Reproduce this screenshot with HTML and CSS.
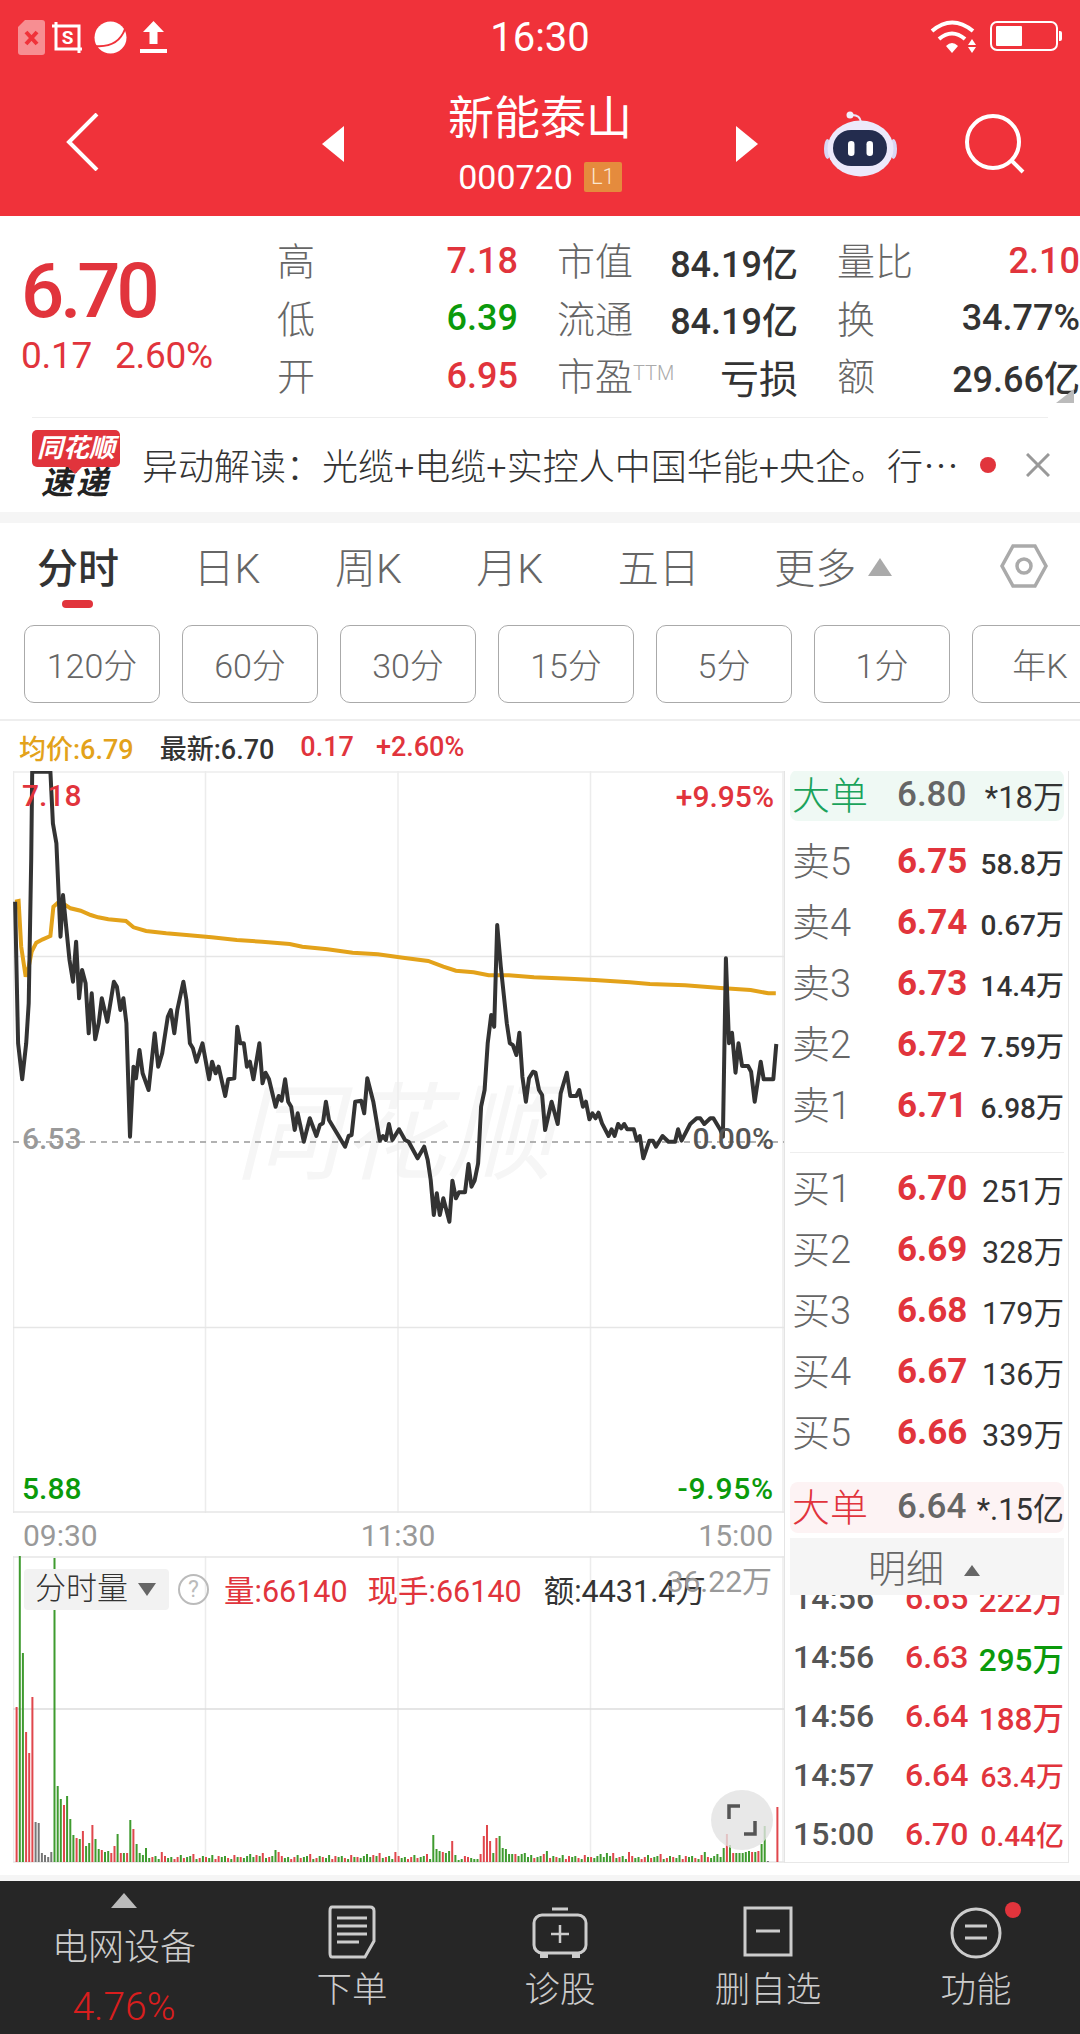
FILE: index.html
```html
<!DOCTYPE html>
<html lang="zh-CN">
<head>
    <meta charset="UTF-8">
    <meta name="viewport" content="width=device-width, initial-scale=1.0">
    <title>新能泰山 000720</title>
    <link rel="stylesheet" href="styles.css">
</head>
<body>
<div class="page">
    <div class="top">
        <div class="status-bar">
            <div class="status-icons">
                <svg class="ic-sim" viewBox="0 0 27 35"><path d="M7 0H24Q27 0 27 3V32Q27 35 24 35H3Q0 35 0 32V7Z" fill="#fff" opacity=".45"/><path d="M8 12L19 24M19 12L8 24" stroke="#f0323a" stroke-width="4"/></svg>
                <svg class="ic-shot" viewBox="0 0 31 31"><path d="M4 0V27H30M0 4H27V31" fill="none" stroke="#fff" stroke-width="3"/><text x="15.500" y="22" text-anchor="middle" class="ic-shot-s">S</text></svg>
                <svg class="ic-planet" viewBox="0 0 33 33"><circle cx="16.500" cy="16.500" r="16" fill="#fff"/><path d="M1 25Q24 27 31 8" fill="none" stroke="#f0323a" stroke-width="2"/></svg>
                <svg class="ic-up" viewBox="0 0 27 32"><path d="M13.500 0L24 11H17.500V23H9.500V11H3Z" fill="#fff"/><rect y="28" width="27" height="4" fill="#fff"/></svg>
            </div>
            <div class="clock">16:30</div>
            <div class="status-right">
                <svg class="ic-wifi" viewBox="0 0 46 33"><g fill="none" stroke="#fff" stroke-width="4"><path d="M2 11Q22 -6 43 11"/><path d="M9 19Q22 8 35 19"/></g><path d="M16 26Q22 20 28 26L22 33Z" fill="#fff"/><path d="M42 19L46 25H38ZM38 27H46L42 33Z" fill="#fff"/></svg>
                <svg class="ic-batt" viewBox="0 0 72 30"><rect x="1" y="1" width="66" height="28" rx="6" fill="none" stroke="#fff" stroke-width="2"/><rect x="6" y="5" width="26" height="20" rx="1" fill="#fff"/><path d="M69 10H70Q72 10 72 12V18Q72 20 70 20H69Z" fill="#fff"/></svg>
            </div>
        </div>
        <div class="nav">
            <svg class="ic-back" viewBox="0 0 33 58"><path d="M31 1L3 29L31 57" fill="none" stroke="#fff" stroke-width="4"/></svg>
            <div class="nav-center">
                <svg class="arrow" viewBox="0 0 22 36"><path d="M22 0V36L0 18Z" fill="#fff"/></svg>
                <div class="stock">
                    <div class="stock-name">新能泰山</div>
                    <div class="stock-code">000720<span class="badge">L1</span></div>
                </div>
                <svg class="arrow" viewBox="0 0 22 36"><path d="M0 0V36L22 18Z" fill="#fff"/></svg>
            </div>
            <div class="nav-right">
                <svg class="ic-robot" viewBox="0 0 73 66">
                    <path d="M37 11Q36 3 26 4" fill="none" stroke="#e9e6fa" stroke-width="2"/>
                    <circle cx="26" cy="4" r="3.500" fill="#f2f0fc"/>
                    <ellipse cx="3.500" cy="38" rx="3.500" ry="10" fill="#d9d6f3"/>
                    <ellipse cx="69.500" cy="38" rx="3.500" ry="10" fill="#d9d6f3"/>
                    <ellipse cx="36.500" cy="37.500" rx="33" ry="28" fill="#ece9fb"/>
                    <rect x="9" y="19" width="54" height="36" rx="18" fill="#232c4e"/>
                    <rect x="24" y="30" width="6.500" height="15" rx="3.200" fill="#fff"/>
                    <rect x="42.500" y="30" width="6.500" height="15" rx="3.200" fill="#fff"/>
                </svg>
                <svg class="ic-search" viewBox="0 0 60 60"><circle cx="28" cy="28" r="26" fill="none" stroke="#fff" stroke-width="4"/><path d="M46 46L58 58" stroke="#fff" stroke-width="4"/></svg>
            </div>
        </div>
    </div>

    <div class="quote">
        <div class="last">
            <div class="last-price">6.70</div>
            <div class="last-change"><span>0.17</span><span>2.60%</span></div>
        </div>
        <div class="stats">
            <div class="stat-row">
                <div class="stat s1"><span class="lbl">高</span><span class="up">7.18</span></div>
                <div class="stat s2"><span class="lbl">市值</span><span>84.19亿</span></div>
                <div class="stat s3"><span class="lbl">量比</span><span class="up">2.10</span></div>
            </div>
            <div class="stat-row">
                <div class="stat s1"><span class="lbl">低</span><span class="down">6.39</span></div>
                <div class="stat s2"><span class="lbl">流通</span><span>84.19亿</span></div>
                <div class="stat s3"><span class="lbl">换</span><span>34.77%</span></div>
            </div>
            <div class="stat-row">
                <div class="stat s1"><span class="lbl">开</span><span class="up">6.95</span></div>
                <div class="stat s2"><span class="lbl">市盈<sup class="ttm">TTM</sup></span><span class="loss">亏损</span></div>
                <div class="stat s3"><span class="lbl">额</span><span>29.66亿</span></div>
            </div>
        </div>
        <div class="corner"></div>
    </div>

    <div class="news">
        <div class="news-logo">
            <div class="logo-top">同花顺</div>
            <div class="logo-bottom">速递</div>
        </div>
        <div class="news-text">异动解读&#xFF1A;光缆+电缆+实控人中国华能+央企。行<span class="ellipsis">…</span></div>
        <div class="news-dot"></div>
        <svg class="news-close" viewBox="0 0 24 24"><path d="M1 1L23 23M23 1L1 23" stroke="#999" stroke-width="3"/></svg>
    </div>

    <div class="tabs">
        <div class="tab active">分时</div>
        <div class="tab">日K</div>
        <div class="tab">周K</div>
        <div class="tab">月K</div>
        <div class="tab">五日</div>
        <div class="tab">更多<span class="tab-caret"></span></div>
        <svg class="ic-hex" viewBox="0 0 48 44"><path d="M13 2H35L46 22L35 42H13L2 22Z" fill="none" stroke="#aaa" stroke-width="3.500"/><circle cx="24" cy="22" r="7" fill="none" stroke="#aaa" stroke-width="3.500"/></svg>
    </div>

    <div class="periods">
        <div class="period">120分</div>
        <div class="period">60分</div>
        <div class="period">30分</div>
        <div class="period">15分</div>
        <div class="period">5分</div>
        <div class="period">1分</div>
        <div class="period">年K</div>
    </div>

    <div class="legend">
        <span class="avg">均价:6.79</span>
        <span class="new">最新:6.70</span>
        <span class="up">0.17</span>
        <span class="up">+2.60%</span>
    </div>

    <div class="main">
        <div class="charts">
            <div class="price-chart">
                <div class="watermark">同花顺</div>
                <svg id="price-svg" class="chart-svg"></svg>
                <div class="tag tl up">7.18</div>
                <div class="tag tr up">+9.95%</div>
                <div class="tag ml gray">6.53</div>
                <div class="tag mr dark">0.00%</div>
                <div class="tag bl down">5.88</div>
                <div class="tag br down">-9.95%</div>
            </div>
            <div class="time-axis"><span>09:30</span><span>11:30</span><span>15:00</span></div>
            <div class="vol-chart">
                <svg id="vol-svg" class="chart-svg"></svg>
                <div class="vol-head">
                    <div class="vol-select">分时量<span class="vol-caret"></span></div>
                    <div class="help">?</div>
                    <span class="up vol-a">量:66140</span>
                    <span class="up vol-b">现手:66140</span>
                    <span class="vol-c">额:4431.4万</span>
                </div>
                <div class="vol-max">36.22万</div>
                <div class="expand">
                    <svg viewBox="0 0 30 32"><path d="M13 2H2V15M17 30H28V17" fill="none" stroke="#555" stroke-width="3.500"/></svg>
                </div>
            </div>
        </div>

        <div class="book">
            <div class="big big-sell">
                <span class="big-label down-g">大单</span><span class="big-price">6.80</span><span class="big-vol">*18万</span>
            </div>
            <div class="levels sells">
                <div class="level"><span class="lv">卖5</span><span class="lp">6.75</span><span class="lq tight">58.8万</span></div>
                <div class="level"><span class="lv">卖4</span><span class="lp">6.74</span><span class="lq tight">0.67万</span></div>
                <div class="level"><span class="lv">卖3</span><span class="lp">6.73</span><span class="lq tight">14.4万</span></div>
                <div class="level"><span class="lv">卖2</span><span class="lp">6.72</span><span class="lq tight">7.59万</span></div>
                <div class="level"><span class="lv">卖1</span><span class="lp">6.71</span><span class="lq tight">6.98万</span></div>
            </div>
            <div class="levels buys">
                <div class="level"><span class="lv">买1</span><span class="lp">6.70</span><span class="lq">251万</span></div>
                <div class="level"><span class="lv">买2</span><span class="lp">6.69</span><span class="lq">328万</span></div>
                <div class="level"><span class="lv">买3</span><span class="lp">6.68</span><span class="lq">179万</span></div>
                <div class="level"><span class="lv">买4</span><span class="lp">6.67</span><span class="lq">136万</span></div>
                <div class="level"><span class="lv">买5</span><span class="lp">6.66</span><span class="lq">339万</span></div>
            </div>
            <div class="big big-buy">
                <span class="big-label up">大单</span><span class="big-price">6.64</span><span class="big-vol">*.15亿</span>
            </div>
            <div class="detail-bar">明细<span class="detail-caret"></span></div>
            <div class="trades">
                <div class="trade first"><span class="tt">14:56</span><span class="tp">6.65</span><span class="tq up">222万</span></div>
                <div class="trade"><span class="tt">14:56</span><span class="tp">6.63</span><span class="tq down">295万</span></div>
                <div class="trade"><span class="tt">14:56</span><span class="tp">6.64</span><span class="tq up">188万</span></div>
                <div class="trade"><span class="tt">14:57</span><span class="tp">6.64</span><span class="tq tight up">63.4万</span></div>
                <div class="trade"><span class="tt">15:00</span><span class="tp">6.70</span><span class="tq tight up">0.44亿</span></div>
            </div>
        </div>
    </div>

    <div class="band"></div>

    <div class="bottom">
        <div class="sector">
            <span class="sector-caret"></span>
            <div class="sector-name">电网设备</div>
            <div class="sector-pct">4.76%</div>
        </div>
        <div class="action">
            <svg class="ic-act" viewBox="0 0 60 54"><path d="M9 2H47Q51 2 51 6V36L42 52H9Q7 52 7 48V6Q7 2 9 2Z" fill="none" stroke="#ccc" stroke-width="3" transform="translate(1 0)"/><path d="M15 13H45M15 21H45M15 29H45M15 37H37" stroke="#ccc" stroke-width="3"/></svg>
            <div class="action-label">下单</div>
        </div>
        <div class="action">
            <svg class="ic-act" viewBox="0 0 60 54"><path d="M22 4H38" stroke="#ccc" stroke-width="3"/><rect x="4" y="10" width="52" height="38" rx="8" fill="none" stroke="#ccc" stroke-width="3"/><path d="M30 20V38M21 29H39" stroke="#ccc" stroke-width="2.500"/><path d="M10 49V53H18V49M42 49V53H50V49" fill="#ccc"/></svg>
            <div class="action-label">诊股</div>
        </div>
        <div class="action">
            <svg class="ic-act" viewBox="0 0 60 54"><rect x="7" y="3" width="46" height="47" fill="none" stroke="#ccc" stroke-width="3"/><path d="M18 26H42" stroke="#ccc" stroke-width="3"/></svg>
            <div class="action-label">删自选</div>
        </div>
        <div class="action">
            <svg class="ic-act" viewBox="0 0 60 54"><circle cx="30" cy="28" r="24" fill="none" stroke="#ccc" stroke-width="3"/><path d="M19 21H41M19 33H41" stroke="#ccc" stroke-width="3"/></svg>
            <div class="action-dot"></div>
            <div class="action-label">功能</div>
        </div>
    </div>
</div>
<script src="chart.js"></script>
</body>
</html>
```

FILE: styles.css
```css
:root {
    --red: #e1343c;
    --green: #0b9a0b;
    --head: #f0323a;
    --text: #333;
    --muted: #666;
    --line: #ececec;
}

* {
    box-sizing: border-box;
}

body {
    margin: 0;
    background: #fff;
    font-family: Roboto, "Noto Sans CJK SC", sans-serif;
    color: var(--text);
}

.page {
    width: 1080px;
    height: 2034px;
    overflow: hidden;
    display: flex;
    flex-direction: column;
}

.up { color: var(--red); }
.down { color: var(--green); }
.gray { color: #999; }
.dark { color: #555; }

/* red header */
.top {
    height: 216px;
    background: var(--head);
    color: #fff;
    flex: none;
}

.status-bar {
    height: 72px;
    display: grid;
    grid-template-columns: 1fr auto 1fr;
    align-items: center;
    padding: 0 18px;
}

.status-icons {
    display: flex;
    align-items: center;
    gap: 7px;
    margin-top: 2px;
}

.ic-sim { width: 27px; height: 35px; }
.ic-shot { width: 31px; height: 31px; margin-right: 4px; }
.ic-shot-s { font-size: 19px; font-weight: 700; fill: #fff; }
.ic-planet { width: 33px; height: 33px; margin-right: 6px; }
.ic-up { width: 27px; height: 32px; }

.clock {
    font-size: 40px;
    text-align: center;
    margin-top: 3px;
}

.status-right {
    display: flex;
    align-items: center;
    justify-content: flex-end;
    gap: 14px;
}

.ic-wifi { width: 46px; height: 33px; }
.ic-batt { width: 72px; height: 30px; }

.nav {
    display: grid;
    grid-template-columns: 1fr 436px 1fr;
    align-items: center;
    padding: 0 55px;
    height: 144px;
}

.ic-back { width: 33px; height: 58px; margin: -5px 0 0 11px; }

.nav-center {
    display: flex;
    align-items: center;
    gap: 0;
}

.arrow { width: 22px; height: 36px; margin-top: 0; }

.stock {
    width: 392px;
    text-align: center;
    margin-top: -6px;
}

.stock-name {
    font-size: 46px;
    line-height: 58px;
}

.stock-code {
    display: flex;
    align-items: center;
    justify-content: center;
    font-size: 34px;
    line-height: 34px;
    margin-top: 13px;
}

.badge {
    width: 38px;
    height: 30px;
    margin-left: 11px;
    background: #e58b3d;
    border-radius: 2px;
    font-size: 22px;
    font-weight: 300;
    line-height: 30px;
    color: #fbe6cf;
}

.nav-right {
    display: flex;
    align-items: center;
    justify-content: flex-end;
    gap: 68px;
}

.ic-robot { width: 73px; height: 66px; margin-top: -1px; }
.ic-search { width: 60px; height: 60px; }

/* quote */
.quote {
    height: 201px;
    margin-bottom: 0;
    display: flex;
    position: relative;
    flex: none;
}

.last {
    width: 277px;
    padding: 31px 0 0 21px;
    flex: none;
}

.last-price {
    font-size: 76px;
    font-weight: 500;
    letter-spacing: -4px;
    line-height: 88px;
    color: var(--red);
}

.last-change {
    display: flex;
    gap: 23px;
    font-size: 37px;
    letter-spacing: -.3px;
    line-height: 40px;
    margin-top: 1px;
    color: var(--red);
}

.stats {
    padding-top: 16px;
    flex: 1;
}

.stat-row {
    display: flex;
    height: 57.500px;
    align-items: center;
    gap: 39px;
    font-size: 36px;
    font-weight: 500;
    white-space: nowrap;
}

.stat {
    display: flex;
    justify-content: space-between;
    align-items: center;
}

.s1 { width: 241px; }
.s2 { width: 241px; }
.s3 { width: 243px; }

.lbl {
    color: var(--muted);
    font-size: 38px;
    font-weight: 300;
    position: relative;
    top: -2px;
}

.loss {
    font-size: 39px;
    font-weight: 400;
}

.ttm {
    font-size: 20px;
    color: #aaa;
    vertical-align: 10px;
    line-height: 0;
}

.corner {
    position: absolute;
    right: 6px;
    bottom: 14px;
    border-left: 18px solid transparent;
    border-bottom: 14px solid #bbb;
}

/* news strip */
.news {
    height: 106px;
    margin: 0 32px;
    padding-bottom: 11px;
    border-top: 1px solid #eee;
    display: flex;
    align-items: center;
    position: relative;
    flex: none;
}

.news::after {
    content: "";
    position: absolute;
    left: -32px;
    right: -32px;
    bottom: 0;
    height: 11px;
    background: #f5f5f5;
}

.news-logo {
    width: 88px;
    flex: none;
    text-align: center;
    font-style: italic;
    font-weight: 700;
}

.logo-top {
    height: 37px;
    background: var(--red);
    border-radius: 5px;
    color: #fff;
    font-size: 26px;
    line-height: 37px;
    white-space: nowrap;
    position: relative;
}

.logo-top::after {
    content: "";
    position: absolute;
    left: 36px;
    top: 37px;
    border-left: 7px solid transparent;
    border-right: 7px solid transparent;
    border-top: 7px solid var(--red);
}

.logo-bottom {
    color: #222;
    font-size: 32px;
    letter-spacing: 3px;
    line-height: 33px;
}

.news-text {
    margin: -3px 0 0 22px;
    width: 817px;
    flex: none;
    font-size: 36px;
    font-weight: 300;
    color: #333;
    white-space: nowrap;
}

.ellipsis {
    font-family: "Noto Sans CJK SC", sans-serif;
}

.news-dot {
    width: 16px;
    height: 16px;
    border-radius: 50%;
    background: var(--red);
    position: absolute;
    left: 948px;
    top: 39px;
}

.news-close {
    width: 24px;
    height: 24px;
    position: absolute;
    left: 994px;
    top: 35px;
}

/* tabs */
.tabs {
    height: 102px;
    padding: 0 32px 0 37px;
    display: flex;
    align-items: center;
    gap: 74.500px;
    font-size: 41px;
    font-weight: 300;
    color: var(--muted);
    position: relative;
    flex: none;
    white-space: nowrap;
}

.tab {
    position: relative;
    margin-top: -18px;
}

.tab.active {
    color: var(--text);
    font-weight: 500;
}

.tab.active::after {
    content: "";
    position: absolute;
    left: 25px;
    bottom: -13px;
    width: 31px;
    height: 8px;
    border-radius: 4px;
    background: var(--red);
}

.tab-caret {
    display: inline-block;
    margin-left: 12px;
    border-left: 12px solid transparent;
    border-right: 12px solid transparent;
    border-bottom: 18px solid #aaa;
    vertical-align: 7px;
}

.ic-hex {
    width: 48px;
    height: 44px;
    margin-left: auto;
    margin-top: -16px;
}

.periods {
    height: 96px;
    padding-left: 24px;
    display: flex;
    gap: 22px;
    border-bottom: 2px solid #eee;
    overflow: hidden;
    flex: none;
}

.period {
    width: 136px;
    height: 78px;
    flex: none;
    border: 1px solid #aaa;
    border-radius: 10px;
    font-size: 34px;
    font-weight: 300;
    line-height: 80px;
    text-align: center;
    color: var(--muted);
}

.legend {
    height: 50px;
    padding: 2px 0 0 19px;
    display: flex;
    align-items: center;
    gap: 26px;
    font-size: 27px;
    font-weight: 500;
    flex: none;
}

.legend .up + .up { margin-left: -4px; }

.avg { color: #e3a21a; }
.new { color: #333; }

/* charts */
.main {
    height: 1092px;
    display: flex;
    flex: none;
}

.charts {
    width: 784px;
    padding-left: 13px;
    flex: none;
}

.price-chart {
    height: 742px;
    position: relative;
    overflow: hidden;
}

.chart-svg {
    position: absolute;
    left: 0;
    top: 0;
    width: 100%;
    height: 100%;
}

.watermark {
    position: absolute;
    left: 222px;
    top: 304px;
    font-size: 106px;
    font-style: italic;
    font-weight: 400;
    line-height: 120px;
    color: #f6f6f6;
    white-space: nowrap;
}

.tag {
    position: absolute;
    font-size: 30px;
    font-weight: 500;
    line-height: 36px;
}

.tl { left: 9px; top: 7px; }
.tr { right: 10px; top: 8px; }
.ml { left: 9px; top: 350px; }
.mr { right: 10px; top: 350px; }
.bl { left: 9px; top: 700px; }
.br { right: 10px; top: 700px; letter-spacing: .8px; }

.time-axis {
    height: 43px;
    padding: 2px 11px 0 10px;
    display: flex;
    justify-content: space-between;
    align-items: center;
    font-size: 30px;
    color: #999;
}

.vol-chart {
    height: 307px;
    position: relative;
}

.vol-head {
    position: absolute;
    left: 11px;
    top: 11px;
    display: flex;
    align-items: center;
    font-size: 30.500px;
    white-space: nowrap;
}

.vol-select {
    width: 145px;
    height: 41px;
    padding-left: 11px;
    background: #f2f2f2;
    border-radius: 4px;
    font-size: 31px;
    font-weight: 300;
    line-height: 40px;
    color: #333;
}

.vol-caret {
    display: inline-block;
    margin-left: 10px;
    border-left: 9px solid transparent;
    border-right: 9px solid transparent;
    border-top: 13px solid #666;
    vertical-align: 3px;
}

.help {
    width: 31px;
    height: 31px;
    margin-left: 9px;
    border: 2px solid #bbb;
    border-radius: 50%;
    font-size: 23px;
    line-height: 27px;
    text-align: center;
    color: #bbb;
}

.vol-a { margin-left: 15px; }
.vol-b { margin-left: 20px; }
.vol-c { margin-left: 22px; color: #333; }

.vol-max {
    position: absolute;
    right: 12px;
    top: 1px;
    font-size: 30px;
    color: #999;
}

.expand {
    position: absolute;
    left: 698px;
    top: 234px;
    width: 62px;
    height: 60px;
    border-radius: 50%;
    background: rgba(226, 226, 226, .8);
    display: flex;
    align-items: center;
    justify-content: center;
}

.expand svg {
    width: 30px;
    height: 32px;
}

/* order book */
.book {
    width: 285px;
    height: 1092px;
    border-left: 1px solid #e4e4e4;
    border-right: 1px solid #e8e8e8;
    border-bottom: 1px solid #e8e8e8;
    padding: 0 4px 0 5px;
    flex: none;
    position: relative;
    overflow: hidden;
}

.big {
    height: 51px;
    padding: 0 0 0 2px;
    display: flex;
    align-items: center;
    border-radius: 8px;
    white-space: nowrap;
}

.big-sell { background: #eff9f4; margin-top: -1px; }
.big-buy { background: #fdf3f4; margin-top: 19px; }

.big-label {
    width: 105px;
    font-size: 38px;
    font-weight: 300;
    margin-top: -6px;
}

.down-g { color: #1aa35b; }

.big-price {
    width: 68px;
    font-size: 35px;
    font-weight: 500;
    color: var(--muted);
    margin-top: -2px;
}

.big-vol {
    flex: 1;
    text-align: right;
    font-size: 31px;
    color: #333;
    margin-top: -2px;
}

.levels {
    padding-left: 2px;
}

.sells {
    margin-top: 10px;
    padding-bottom: 16px;
    border-bottom: 1px solid #eee;
}

.buys {
    margin-top: 5px;
}

.level {
    height: 61px;
    display: flex;
    align-items: center;
    white-space: nowrap;
}

.lv {
    width: 105px;
    font-size: 38px;
    font-weight: 300;
    color: var(--muted);
    margin-top: -6px;
}

.lp {
    width: 68px;
    font-size: 35px;
    font-weight: 700;
    color: var(--red);
}

.lq {
    flex: 1;
    text-align: right;
    font-size: 30.500px;
    color: #333;
}

.lq.tight {
    font-size: 28px;
    font-weight: 500;
}

.detail-bar {
    height: 57px;
    margin-top: 5px;
    background: #f5f5f5;
    font-size: 38px;
    font-weight: 300;
    line-height: 62px;
    text-align: center;
    color: var(--muted);
    position: relative;
    z-index: 1;
    padding-right: 6px;
}

.detail-caret {
    display: inline-block;
    margin-left: 20px;
    border-left: 8px solid transparent;
    border-right: 8px solid transparent;
    border-bottom: 11px solid #666;
    vertical-align: 6px;
}

.trade {
    height: 59px;
    padding-left: 3px;
    display: flex;
    align-items: center;
    white-space: nowrap;
}

.trade.first {
    margin-top: -27px;
}

.tt {
    width: 112px;
    font-size: 32px;
    font-weight: 500;
    color: #555;
}

.tp {
    width: 62px;
    font-size: 32px;
    font-weight: 500;
    color: var(--red);
}

.tq {
    flex: 1;
    text-align: right;
    font-size: 31.500px;
    font-weight: 500;
}

.tq.tight {
    font-size: 28px;
}

/* bottom bar */
.band {
    height: 18px;
    flex: none;
    border-bottom: 6px solid #f5f5f5;
}

.bottom {
    height: 153px;
    background: #262626;
    display: grid;
    grid-template-columns: 248px repeat(4, 1fr);
    color: #ccc;
    font-size: 35.500px;
    font-weight: 300;
    flex: none;
}

.sector {
    text-align: center;
    padding-top: 12px;
    position: relative;
}

.sector-caret {
    display: block;
    width: 0;
    margin: 0 auto;
    border-left: 13px solid transparent;
    border-right: 13px solid transparent;
    border-bottom: 15px solid #bbb;
}

.sector-name {
    line-height: 44px;
    margin-top: 18px;
    font-size: 36px;
}

.sector-pct {
    margin-top: 15px;
    font-size: 39px;
    line-height: 44px;
    color: #d81e1e;
}

.action {
    padding-top: 24px;
    text-align: center;
    position: relative;
}

.ic-act {
    display: block;
    width: 60px;
    height: 54px;
    margin: 0 auto;
}

.action-label {
    line-height: 44px;
    margin-top: 9px;
}

.action-dot {
    position: absolute;
    left: 133px;
    top: 21px;
    width: 16px;
    height: 16px;
    border-radius: 50%;
    background: var(--red);
}
```

FILE: chart.js
```js
// traced points, x/y measured off the source picture (x scale 1.985, y scale 3)
const PRICE = [30,425,36,850,44,958,52,850,57,730,62,300,64,35,100,35,105,190,112,250,120,530,125,405,130,480,138,600,145,665,151,545,157,715,163,630,170,670,176,820,182,700,189,838,196,790,202,715,213,785,226,665,232,680,239,750,245,715,251,790,258,1130,265,920,270,955,277,870,283,940,295,990,307,820,314,920,322,880,333,770,339,750,346,820,352,750,364,665,370,720,377,850,383,865,390,905,402,850,415,958,421,905,428,940,434,920,447,1008,453,958,465,955,471,800,477,850,484,850,490,920,496,905,503,958,515,850,521,970,527,938,534,958,547,1040,553,1008,559,1022,566,958,572,1025,578,1040,585,1110,591,1060,603,1145,615,1075,628,1128,635,1095,641,1090,647,1025,653,1080,685,1160,692,1128,698,1125,705,1025,717,1022,723,1060,729,955,741,1025,754,1142,760,1128,766,1140,772,1092,779,1140,792,1108,804,1140,811,1145,829,1195,842,1160,849,1200,855,1260,861,1365,867,1300,873,1365,880,1315,892,1385,898,1262,905,1315,911,1297,923,1297,930,1212,936,1280,942,1262,949,1210,955,1040,962,990,968,850,975,765,981,800,987,495,994,620,1006,790,1012,850,1018,855,1025,885,1031,818,1037,950,1044,1025,1050,955,1058,935,1063,938,1070,990,1076,1005,1082,1110,1095,1025,1107,1092,1113,1000,1125,938,1132,1008,1144,1008,1150,990,1157,1040,1163,1025,1170,1078,1176,1060,1182,1075,1188,1058,1195,1090,1208,1128,1214,1108,1220,1128,1227,1092,1233,1105,1239,1092,1245,1108,1258,1108,1264,1142,1270,1128,1277,1195,1289,1142,1296,1142,1302,1160,1315,1128,1327,1145,1340,1145,1346,1108,1353,1142,1370,1092,1383,1075,1390,1075,1398,1092,1410,1075,1416,1075,1430,1110,1435,1130,1441,595,1447,850,1453,818,1460,938,1466,850,1473,918,1485,918,1491,935,1498,1025,1510,905,1516,958,1535,958,1541,852];

const AVG = [30,425,37,423,42,560,51,650,57,620,63,575,72,548,85,538,100,528,106,440,115,428,130,435,140,445,160,452,180,465,195,472,215,478,250,483,265,502,290,513,330,520,370,525,420,532,470,540,520,545,575,552,600,560,650,568,700,578,750,583,800,593,850,603,880,620,905,632,940,637,970,646,1010,646,1060,652,1130,656,1180,660,1250,667,1290,672,1360,676,1430,684,1490,690,1525,700,1540,700];

// volume bars in px: positive red, negative green
const VOL_HEAD = [155,-306,-209,130,109,165,0,0,0,0,0,0,-304,-76,-63,57,-66,-43,-27,24,-23,31,-16,-19,37,-23,-13,12,-10,-11,9,16,-28,9,-9,9,-42,33,-18,-9,-7,-14];
const VOL_GREY = {6:40,7:39,8:9,9:7,10:5,11:10,238:1};
const VOL_LOW = [-8,-5,7,-6,9,-4,5,-6,-3,10,6,-4,-5,3,5,-7,4,-5,-6,8,-3,4,-6,5,-4,-7,3,6,-5,-6,4,-3,7,-5,5,-4,-6];
const VOL_PEAK = {82:-12,132:-27,133:-13,134:-11,135:10,136:-9,137:-11,138:21,139:-7,140:-2,141:-3,142:6,143:5,144:-4,145:-3,146:-3,147:8,148:26,149:37,150:21,151:-9,152:24,153:-26,154:-14,155:-13,156:-8,157:-8,158:8,159:-6,160:-8,161:-9,162:-5,168:-11,187:-9,218:-10,224:-14,225:28,226:-17,227:9,228:-9,229:-9,230:-9,231:-10,232:-11,233:10,234:-10,235:11,236:-18,237:-36,239:0,240:0,241:55};

const NS = "http://www.w3.org/2000/svg";

function el(name, attrs) {
    const node = document.createElementNS(NS, name);
    for (const key in attrs) node.setAttribute(key, attrs[key]);
    return node;
}

function hline(svg, y, color, dash) {
    svg.appendChild(el("line", {x1: 0, x2: 771, y1: y, y2: y, stroke: color, "stroke-width": 1.5, "stroke-dasharray": dash || "none"}));
}

function vlines(svg, height) {
    [0.5, 192.5, 385, 577.5, 770].forEach(function(x) {
        svg.appendChild(el("line", {x1: x, x2: x, y1: 0, y2: height, stroke: "#ececec", "stroke-width": 1.5}));
    });
}

function trace(points) {
    let out = "";
    for (let i = 0; i < points.length; i += 2) {
        out += (points[i] / 1.985 - 13).toFixed(1) + "," + ((points[i + 1] - 33) / 3).toFixed(1) + " ";
    }
    return out;
}

function drawPrice() {
    const svg = document.getElementById("price-svg");
    vlines(svg, 742);
    hline(svg, 1, "#ececec");
    hline(svg, 185.5, "#e6e6e6");
    hline(svg, 556.5, "#e6e6e6");
    hline(svg, 741, "#e6e6e6");
    hline(svg, 371, "#999", "6 5");
    svg.appendChild(el("polyline", {points: trace(AVG), fill: "none", stroke: "#e3a21a", "stroke-width": 4}));
    svg.appendChild(el("polyline", {points: trace(PRICE), fill: "none", stroke: "#333", "stroke-width": 4, "stroke-linejoin": "round"}));
}

function drawVolume() {
    const svg = document.getElementById("vol-svg");
    const base = 306;
    vlines(svg, 306);
    hline(svg, 1, "#e6e6e6");
    hline(svg, 153, "#ddd");
    hline(svg, 306, "#e6e6e6");
    for (let i = 0; i < 242; i++) {
        let v = i < VOL_HEAD.length ? VOL_HEAD[i] : VOL_LOW[i % VOL_LOW.length];
        if (i in VOL_PEAK) v = VOL_PEAK[i];
        let color = v > 0 ? "#e0474c" : "#3f9b2f";
        if (i in VOL_GREY) {
            v = VOL_GREY[i];
            color = "#777";
        }
        if (!v) continue;
        const h = Math.abs(v);
        const x = (31 + 6.266 * i) / 1.985 - 13;
        svg.appendChild(el("rect", {x: x.toFixed(1), y: base - h, width: 2, height: h, fill: color}));
    }
}

drawPrice();
drawVolume();
```
